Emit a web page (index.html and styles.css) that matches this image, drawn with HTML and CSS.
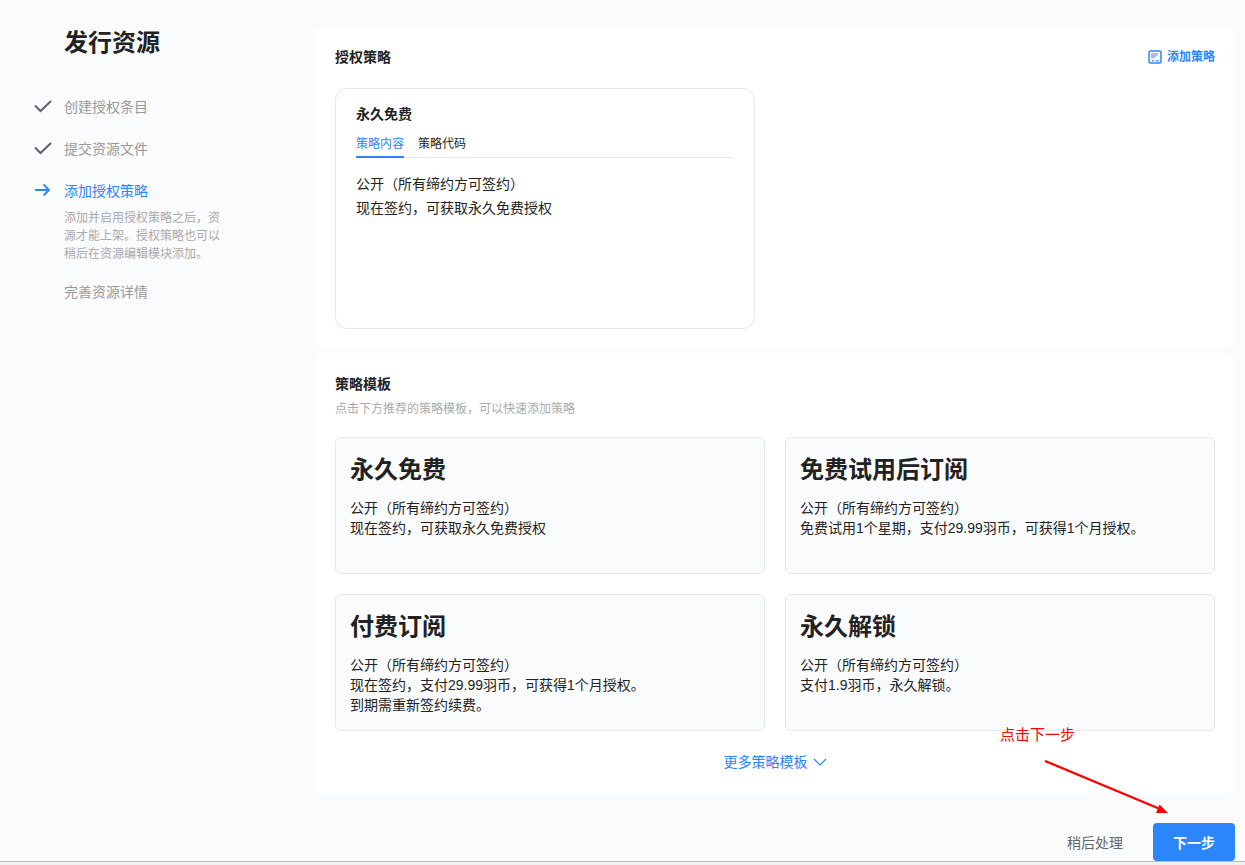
FILE: index.html
```html
<!DOCTYPE html>
<html>
<head>
  <title>发行资源</title>
  <meta charset="UTF-8">
  <link rel="stylesheet" href="styles.css">
</head>
<body>
  <div class="page">
    <div class="sidebar">
      <h1>发行资源</h1>
      <div class="step done">
        <svg class="step-icon" viewBox="0 0 18 14"><path d="M1 6.5 L6.5 12 L17 2" fill="none" stroke="#5f6368" stroke-width="2"/></svg>
        <span>创建授权条目</span>
      </div>
      <div class="step done">
        <svg class="step-icon" viewBox="0 0 18 14"><path d="M1 6.5 L6.5 12 L17 2" fill="none" stroke="#5f6368" stroke-width="2"/></svg>
        <span>提交资源文件</span>
      </div>
      <div class="step active">
        <svg class="step-icon" viewBox="0 0 18 14"><path d="M1 7 H15 M9.5 1.5 L15 7 L9.5 12.5" fill="none" stroke="#2b85fb" stroke-width="1.8"/></svg>
        <span>添加授权策略</span>
      </div>
      <div class="step-note">添加并启用授权策略之后，资源才能上架。授权策略也可以稍后在资源编辑模块添加。</div>
      <div class="step todo"><span>完善资源详情</span></div>
    </div>

    <div class="main">
      <div class="panel panel-policy">
        <div class="panel-head">
          <h2>授权策略</h2>
          <a class="add-link">
            <svg class="add-icon" viewBox="0 0 14 14"><rect x="1" y="1" width="12" height="12" rx="1.5" fill="#fff" stroke="#2b85fb" stroke-width="1.5"/><path d="M3 3 H10 V5 L6 8.5 H3 Z" fill="#a9b8e8"/><path d="M4 10 H6 V11.5 H4 Z M7.5 10 H11 V11.5 H7.5 Z" fill="#6f94f2"/></svg>
            添加策略
          </a>
        </div>
        <div class="policy-card">
          <div class="policy-title">永久免费</div>
          <div class="tabs">
            <div class="tab tab-active">策略内容</div>
            <div class="tab">策略代码</div>
          </div>
          <div class="policy-text">
            <div>公开（所有缔约方可签约）</div>
            <div>现在签约，可获取永久免费授权</div>
          </div>
        </div>
      </div>

      <div class="panel panel-templates">
        <h2>策略模板</h2>
        <div class="hint">点击下方推荐的策略模板，可以快速添加策略</div>
        <div class="template-grid">
          <div class="template">
            <h3>永久免费</h3>
            <p>公开（所有缔约方可签约）</p>
            <p>现在签约，可获取永久免费授权</p>
          </div>
          <div class="template">
            <h3>免费试用后订阅</h3>
            <p>公开（所有缔约方可签约）</p>
            <p>免费试用1个星期，支付29.99羽币，可获得1个月授权。</p>
          </div>
          <div class="template">
            <h3>付费订阅</h3>
            <p>公开（所有缔约方可签约）</p>
            <p>现在签约，支付29.99羽币，可获得1个月授权。</p>
            <p>到期需重新签约续费。</p>
          </div>
          <div class="template">
            <h3>永久解锁</h3>
            <p>公开（所有缔约方可签约）</p>
            <p>支付1.9羽币，永久解锁。</p>
          </div>
        </div>
        <div class="more">
          更多策略模板
          <svg class="more-icon" viewBox="0 0 14 8"><path d="M1 1 L7 7 L13 1" fill="none" stroke="#2b85fb" stroke-width="1.2"/></svg>
        </div>
      </div>

      <div class="footer">
        <span class="later">稍后处理</span>
        <button class="next">下一步</button>
      </div>
    </div>
  </div>

  <!-- red annotation drawn over the screenshot -->
  <div class="note-text">点击下一步</div>
  <svg class="note-arrow" viewBox="0 0 125 55">
    <path d="M1 1 L116 49" stroke="#ff0000" stroke-width="2.4" fill="none"/>
    <path d="M124 53 L112 53 L115.5 44.5 Z" fill="#ff0000"/>
  </svg>
  <div class="bottom-edge"></div>
</body>
</html>
```

FILE: styles.css
```css
html, body {
  margin: 0;
  padding: 0;
}
body {
  position: relative;
  width: 1245px;
  height: 865px;
  overflow: hidden;
  background-color: #fafbfd;
  font-family: "Liberation Sans", "Noto Sans CJK SC", sans-serif;
  color: #222;
}
.page {
  display: flex;
  padding-top: 26px;
}
.sidebar {
  width: 315px;
  flex-shrink: 0;
  box-sizing: border-box;
  padding-left: 34px;
}
h1 {
  margin: 1px 0 37px 30px;
  font-size: 24px;
  line-height: 32px;
  font-weight: 700;
  color: #222;
}
.step {
  display: flex;
  align-items: center;
  height: 20px;
  margin-bottom: 22px;
  font-size: 14px;
  color: #999;
}
.step span {
  margin-left: 30px;
}
.step-icon {
  width: 18px;
  height: 14px;
  margin-right: -18px;
}
.step.active {
  color: #2b85fb;
  margin-bottom: 9px;
}
.step.todo {
  margin-top: 18px;
}
.step-note {
  width: 160px;
  margin-left: 30px;
  font-size: 12px;
  line-height: 18px;
  color: #aaa;
}
.main {
  width: 920px;
  flex-shrink: 0;
}
.panel {
  background-color: #fff;
  border-radius: 10px;
  box-sizing: border-box;
  padding-left: 20px;
  padding-right: 20px;
}
.panel-policy {
  height: 322px;
  padding-top: 22px;
  margin-bottom: 5px;
}
.panel-head {
  display: flex;
  justify-content: space-between;
  align-items: center;
}
h2 {
  margin: 0;
  font-size: 14px;
  line-height: 18px;
  font-weight: 700;
  color: #222;
}
.add-link {
  display: flex;
  align-items: center;
  gap: 5px;
  font-size: 12px;
  line-height: 16px;
  font-weight: 700;
  color: #2b85fb;
}
.add-icon {
  width: 14px;
  height: 14px;
  margin-bottom: 1px;
}
.policy-card {
  width: 420px;
  height: 241px;
  box-sizing: border-box;
  margin-top: 22px;
  padding: 16px 20px 0;
  border: 1px solid #e5e7eb;
  border-radius: 12px;
}
.policy-title {
  font-size: 14px;
  line-height: 18px;
  font-weight: 700;
}
.tabs {
  display: flex;
  gap: 14px;
  margin-top: 12px;
  border-bottom: 1px solid #e5e7eb;
}
.tab {
  font-size: 12px;
  line-height: 18px;
  padding-bottom: 3px;
  margin-bottom: -1px;
  border-bottom: 2px solid transparent;
}
.tab-active {
  color: #2b85fb;
  border-bottom-color: #2b85fb;
}
.policy-text {
  margin-top: 14px;
  font-size: 14px;
  line-height: 24px;
}
.panel-templates {
  height: 441px;
  padding-top: 22px;
}
.hint {
  margin-top: 7px;
  font-size: 12px;
  line-height: 18px;
  color: #aaa;
}
.template-grid {
  display: grid;
  grid-template-columns: 430px 430px;
  grid-template-rows: 137px 137px;
  column-gap: 20px;
  row-gap: 20px;
  margin-top: 19px;
}
.template {
  box-sizing: border-box;
  padding: 15px 14px 0;
  background-color: #fafbfd;
  border: 1px solid #e5e7eb;
  border-radius: 6px;
}
.template h3 {
  margin: 0 0 11px;
  font-size: 24px;
  line-height: 34px;
  font-weight: 700;
  color: #222;
}
.template p {
  margin: 0;
  font-size: 14px;
  line-height: 20px;
  color: #222;
}
.more {
  display: flex;
  justify-content: center;
  align-items: center;
  gap: 5px;
  margin-top: 21px;
  font-size: 14px;
  line-height: 20px;
  color: #2b85fb;
}
.more-icon {
  width: 14px;
  height: 8px;
}
.footer {
  display: flex;
  justify-content: flex-end;
  align-items: center;
  gap: 30px;
  margin-top: 29px;
}
.later {
  font-size: 14px;
  color: #666;
  margin-bottom: 1px;
}
.next {
  width: 82px;
  height: 38px;
  background-color: #2b85fb;
  color: #fff;
  border: none;
  border-radius: 4px;
  font-family: inherit;
  font-size: 14px;
  font-weight: 700;
}
.note-text {
  position: absolute;
  left: 1000px;
  top: 725px;
  font-size: 15px;
  line-height: 20px;
  color: #ff0000;
}
.note-arrow {
  position: absolute;
  left: 1044px;
  top: 760px;
  width: 125px;
  height: 55px;
}
.bottom-edge {
  position: absolute;
  left: 0;
  right: 0;
  bottom: 0;
  height: 4px;
  background-color: #f0f0f0;
  border-top: 1px solid #bbb;
  box-sizing: border-box;
}
```
